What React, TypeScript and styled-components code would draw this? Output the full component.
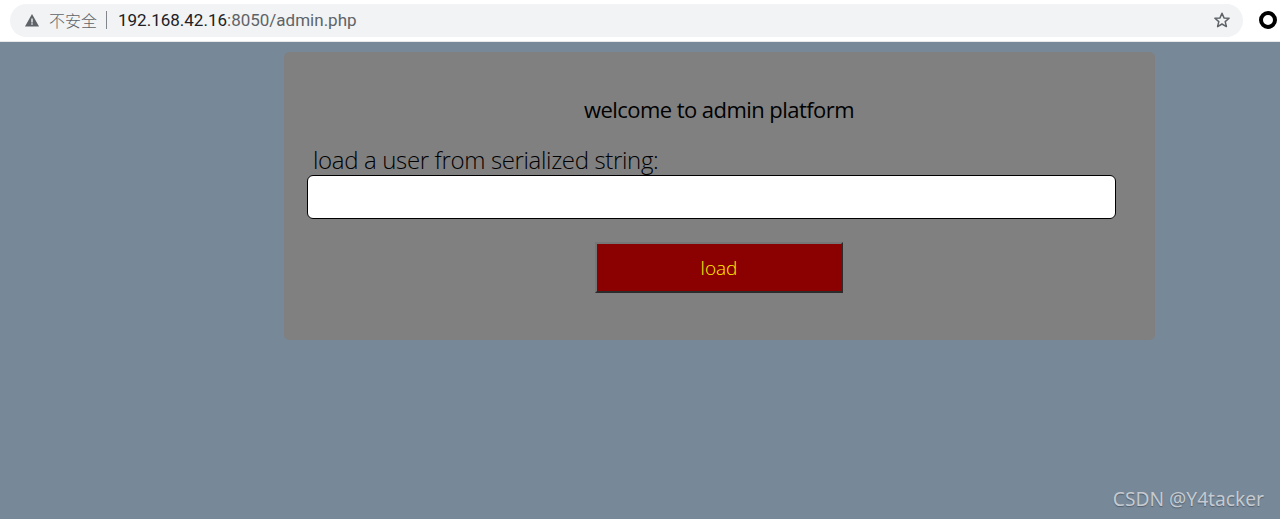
import styled, { createGlobalStyle } from "styled-components";

const GlobalStyle = createGlobalStyle`
  html, body {
    margin: 0;
    padding: 0;
    height: 100%;
    background: #778899;
  }
  #root {
    height: 100%;
  }
`;

const Page = styled.div`
  position: relative;
  height: 519px;
  overflow: hidden;
  display: flex;
  flex-direction: column;
  font-family: "Open Sans", "Noto Sans CJK SC", sans-serif;
`;

const BrowserBar = styled.header`
  height: 42px;
  box-sizing: border-box;
  padding: 4px 3px 5px 10px;
  background: #fff;
  border-bottom: 1px solid #e6e8ea;
  display: flex;
  align-items: center;
  flex: none;
`;

const Omnibox = styled.div`
  flex: 1;
  height: 33px;
  border-radius: 17px;
  background: #f1f3f4;
  display: flex;
  align-items: center;
  padding: 0 12px 0 14px;
`;

const NotSecure = styled.span`
  margin-left: 9px;
  font-size: 16px;
  color: #5f6368;
  font-family: "Noto Sans CJK SC", sans-serif;
  font-weight: 300;
`;

const Divider = styled.span`
  width: 1px;
  height: 18px;
  background: #80868b;
  margin: 0 11px 0 9px;
`;

const Url = styled.span`
  font-family: "Roboto", sans-serif;
  font-size: 17px;
  color: #5f6368;
  flex: 1;
`;

const Host = styled.span`
  color: #202124;
`;

const ProfileDot = styled.span`
  width: 10px;
  height: 10px;
  border: 4px solid #000;
  border-radius: 50%;
  margin-left: 16px;
  background: #fff;
  flex: none;
`;

const Main = styled.main`
  flex: 1;
  padding: 10px 125px 0 284px;
`;

const Panel = styled.section`
  height: 288px;
  box-sizing: border-box;
  background: #808080;
  border-radius: 5px;
  padding: 39px 39px 0 23px;
  display: flex;
  flex-direction: column;
`;

const Title = styled.h1`
  margin: 0;
  height: 36px;
  line-height: 36px;
  text-align: center;
  font-size: 22px;
  font-weight: 400;
  color: #000;
  letter-spacing: -0.55px;
  padding-left: 15px;
`;

const FieldLabel = styled.label`
  display: block;
  margin-top: 16px;
  height: 32px;
  line-height: 34px;
  padding-left: 6px;
  font-size: 24px;
  font-weight: 300;
  color: #000;
  letter-spacing: -0.35px;
`;

const TextInput = styled.input`
  display: block;
  width: 100%;
  height: 44px;
  box-sizing: border-box;
  background: #fff;
  border: 1px solid #000;
  border-radius: 6px;
  outline: none;
`;

const LoadButton = styled.button`
  display: block;
  align-self: center;
  margin: 23px 0 0 15px;
  width: 248px;
  height: 51px;
  box-sizing: border-box;
  background: #8b0000;
  color: #fff200;
  border: 2px solid;
  border-color: #767676 #2b2b2b #2b2b2b #767676;
  font-family: inherit;
  font-size: 19px;
  font-weight: 300;
  padding: 0;
`;

const Watermark = styled.span`
  position: absolute;
  right: 16px;
  bottom: 7px;
  font-family: "Noto Sans", sans-serif;
  font-size: 19.2px;
  color: #c4cad0;
  text-shadow: 0 1px 1px rgba(60, 70, 80, 0.6);
`;

export default function App() {
  return (
    <>
      <GlobalStyle />
      <Page>
        <BrowserBar>
          <Omnibox>
            <svg width="16" height="16" viewBox="0 0 16 16" aria-hidden="true">
              <path d="M8 2 15 14.5H1Z" fill="#5f6368" />
              <rect x="7.3" y="6.5" width="1.4" height="4" fill="#f1f3f4" />
              <rect x="7.3" y="11.3" width="1.4" height="1.4" fill="#f1f3f4" />
            </svg>
            <NotSecure>不安全</NotSecure>
            <Divider />
            <Url>
              <Host>192.168.42.16</Host>:8050/admin.php
            </Url>
            <svg width="18" height="18" viewBox="0 0 18 18" aria-hidden="true">
              <path
                d="M9 2.2 11 6.9l5.1.4-3.9 3.3 1.2 5L9 13l-4.4 2.6 1.2-5-3.9-3.3 5.1-.4Z"
                fill="none"
                stroke="#5f6368"
                strokeWidth="1.5"
                strokeLinejoin="round"
              />
            </svg>
          </Omnibox>
          <ProfileDot />
        </BrowserBar>
        <Main>
          <Panel>
            <Title>welcome to admin platform</Title>
            <FieldLabel htmlFor="serialized">load a user from serialized string:</FieldLabel>
            <TextInput id="serialized" type="text" />
            <LoadButton type="button">load</LoadButton>
          </Panel>
        </Main>
        <Watermark>CSDN @Y4tacker</Watermark>
      </Page>
    </>
  );
}
